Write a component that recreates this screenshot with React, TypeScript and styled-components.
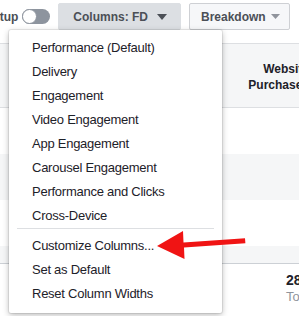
import React from "react";
import styled, { createGlobalStyle } from "styled-components";

const Global = createGlobalStyle`
  html, body { margin: 0; padding: 0; background: #ffffff; overflow: hidden; }
  body { font-family: "Liberation Sans", Arial, Helvetica, sans-serif; -webkit-font-smoothing: antialiased; }
  * { box-sizing: border-box; }
`;

const Page = styled.div`
  position: relative;
  width: 299px;
  height: 316px;
  overflow: hidden;
  background: #ffffff;
`;

const Toolbar = styled.div`
  display: flex;
  align-items: center;
  height: 27px;
  margin-top: 3px;
  margin-left: -15px;
`;

const SetupLabel = styled.span`
  font-size: 12px;
  font-weight: bold;
  color: #4b4f56;
  margin-right: 4px;
`;

const Track = styled.span`
  position: relative;
  display: inline-block;
  width: 28px;
  height: 15px;
  border-radius: 8px;
  background: #8d949e;
  margin-right: 8px;
`;

const Knob = styled.span`
  position: absolute;
  left: 0;
  top: 0;
  width: 15px;
  height: 15px;
  border-radius: 50%;
  background: #ffffff;
  border: 1px solid #8d949e;
`;

const ToolButton = styled.button<{ $active?: boolean }>`
  display: flex;
  align-items: center;
  height: 27px;
  margin: 0 8px 0 0;
  padding: ${(p) => (p.$active ? "0 13px 0 14px" : "0 9px 0 11px")};
  font-family: inherit;
  font-size: 12px;
  font-weight: bold;
  color: #4b4f56;
  background: ${(p) => (p.$active ? "#dcdfe3" : "#f6f7f9")};
  border: 1px solid ${(p) => (p.$active ? "#dcdfe3" : "#ced0d4")};
  border-radius: 2px;
  white-space: nowrap;
`;

const Caret = styled.svg<{ $gap: number }>`
  margin-left: ${(p) => p.$gap}px;
  display: block;
`;

const Table = styled.div`
  width: 320px;
  margin-top: 13px;
`;

const HeaderRow = styled.div`
  display: grid;
  grid-template-columns: 1fr 110px;
  height: 65px;
  background: #f5f6f7;
  border-top: 1px solid #dddfe2;
  border-bottom: 1px solid #dddfe2;
`;

const HeaderCell = styled.div`
  grid-column: 2;
  align-self: center;
  text-align: right;
  padding-right: 11px;
  font-size: 12px;
  font-weight: bold;
  line-height: 16px;
  color: #1d2129;
  margin-top: 3px;
`;

const BodyRow = styled.div<{ $h: number; $alt?: boolean }>`
  height: ${(p) => p.$h}px;
  background: ${(p) => (p.$alt ? "#f5f6f7" : "#ffffff")};
`;

const FooterRow = styled.div`
  display: grid;
  grid-template-columns: 1fr 110px;
  border-top: 1px solid #ccd0d5;
  height: 60px;
  background: #ffffff;
`;

const FooterCell = styled.div`
  grid-column: 2;
  padding: 8px 0 0 76px;
  white-space: nowrap;
`;

const FooterValue = styled.div`
  font-size: 14px;
  font-weight: bold;
  color: #1d2129;
  line-height: 16px;
`;

const FooterLabel = styled.div`
  font-size: 13px;
  color: #90949c;
  line-height: 18px;
`;

const Menu = styled.div`
  position: absolute;
  left: 9px;
  top: 30px;
  width: 213px;
  height: 283px;
  background: #ffffff;
  border-radius: 2px;
  padding: 6px 0 7px;
  box-shadow: 0 0 0 1px rgba(0, 0, 0, 0.07), 0 2px 6px rgba(0, 0, 0, 0.28);
`;

const MenuItem = styled.div`
  height: 24px;
  line-height: 24px;
  padding-left: 23px;
  font-size: 13px;
  letter-spacing: -0.25px;
  color: #1d2129;
  white-space: nowrap;
`;

const Separator = styled.div`
  height: 1px;
  margin: 0 8px 5px;
  background: #dddfe2;
`;

const Arrow = styled.svg`
  position: absolute;
  left: 0;
  top: 0;
  pointer-events: none;
`;

const viewItems = [
  "Performance (Default)",
  "Delivery",
  "Engagement",
  "Video Engagement",
  "App Engagement",
  "Carousel Engagement",
  "Performance and Clicks",
  "Cross-Device",
];

const actionItems = ["Customize Columns...", "Set as Default", "Reset Column Widths"];

export default function App() {
  return (
    <>
      <Global />
      <Page>
        <Toolbar>
          <SetupLabel>Setup</SetupLabel>
          <Track>
            <Knob />
          </Track>
          <ToolButton $active>
            Columns: FD
            <Caret $gap={9} width="10" height="6" viewBox="0 0 10 6">
              <path d="M0 0 L10 0 L5 6 Z" fill="#4b4f56" />
            </Caret>
          </ToolButton>
          <ToolButton>
            Breakdown
            <Caret $gap={5} width="9" height="5" viewBox="0 0 9 5">
              <path d="M0 0 L9 0 L4.5 5 Z" fill="#90949c" />
            </Caret>
          </ToolButton>
        </Toolbar>

        <Table>
          <HeaderRow>
            <HeaderCell>
              Website
              <br />
              Purchases
            </HeaderCell>
          </HeaderRow>
          <BodyRow $h={46} />
          <BodyRow $h={46} $alt />
          <BodyRow $h={46} />
          <BodyRow $h={17} $alt />
          <FooterRow>
            <FooterCell>
              <FooterValue>28</FooterValue>
              <FooterLabel>Total</FooterLabel>
            </FooterCell>
          </FooterRow>
        </Table>

        <Menu>
          {viewItems.map((t) => (
            <MenuItem key={t}>{t}</MenuItem>
          ))}
          <Separator />
          {actionItems.map((t) => (
            <MenuItem key={t}>{t}</MenuItem>
          ))}
        </Menu>

        <Arrow width="299" height="316" viewBox="0 0 299 316">
          <polygon
            points="157,246 183,231 183.5,242.5 245,238.2 245.4,243.2 184,247.6 184.5,259"
            fill="#f01414"
          />
        </Arrow>
      </Page>
    </>
  );
}
